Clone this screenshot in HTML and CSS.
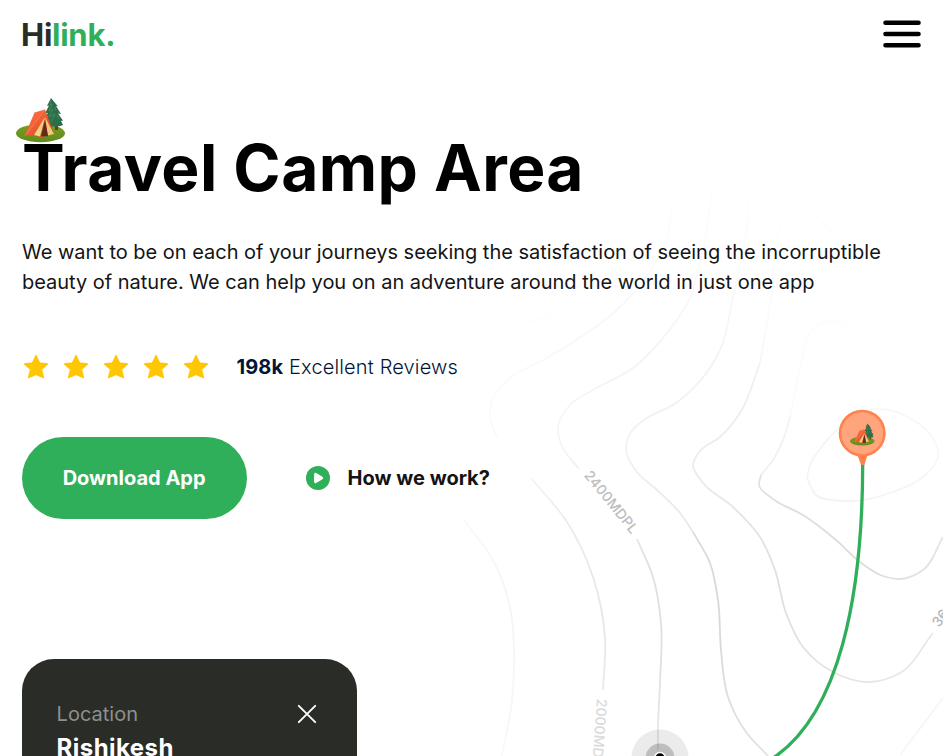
FILE: index.html
```
<!DOCTYPE html>
<html lang="en">
<head>
<meta charset="utf-8">
<meta name="viewport" content="width=device-width, initial-scale=1">
<title>Hilink</title>
<link rel="stylesheet" href="styles.css">
</head>
<body>
<svg width="0" height="0" class="sprite" aria-hidden="true">
  <defs>
    <linearGradient id="canvas" x1="0" y1="0" x2="1" y2="1"><stop offset="0" stop-color="#ff7a4c"/><stop offset="1" stop-color="#dd3d17"/></linearGradient>
    <linearGradient id="grass" x1="0" y1="0" x2="0" y2="1"><stop offset="0" stop-color="#789f25"/><stop offset="1" stop-color="#608a1c"/></linearGradient>
    <symbol id="camp" viewBox="0 0 50 48">
      <ellipse cx="24.500" cy="38.200" rx="24.500" ry="9" fill="url(#grass)"/>
      <path d="M39 25h3v10h-3z" fill="#654321"/>
      <path d="M35 3l-4 8 2-.5-4 8 3-.5-5 7 5-1-2 6c5 2 12 2 17 0l-2-4 2-.5-5-7 3 .5-5-8 2 .5z" fill="#2c6e4a"/>
      <path d="M35 5l-1 5 2-1-3 7 4-2-4 8 6-3-4 8M39 12l1 4M41 20l2 4" fill="none" stroke="#4b8a68" stroke-width=".8"/>
      <path d="M18.500 17.500 29 14.500 38 38.500 27 42 9 40z" fill="url(#canvas)"/>
      <path d="M29 14.500 9 40.500" stroke="#ff8358" stroke-width=".8" fill="none"/>
      <path d="M29 22 18 40l6 1.500z" fill="#efd58a"/>
      <path d="M29 22 38 39l-6 1.500z" fill="#ecca7c"/>
      <path d="M29 25 25 41.300h7z" fill="#5a2c1d"/>
    </symbol>
    <symbol id="star" viewBox="0 0 30 30">
      <path d="M15 3.500 18.500 11l8 .9-6 5.400 1.900 8.200-7.400-3.100-7.400 3.100 1.900-8.200-6-5.400 8-.9z" fill="#ffc704" stroke="#ffc704" stroke-width="1.400" stroke-linejoin="round"/>
    </symbol>
  </defs>
</svg>

<svg class="map" width="943" height="756" viewBox="0 0 943 756" aria-hidden="true">
  <defs>
    <radialGradient id="fade" gradientUnits="userSpaceOnUse" cx="800" cy="595" r="400">
      <stop offset="0" stop-color="#cfcfcf"/>
      <stop offset=".38" stop-color="#e0e0e0"/>
      <stop offset=".75" stop-color="#f5f5f5"/>
      <stop offset="1" stop-color="#fdfdfd"/>
    </radialGradient>
  </defs>
  <g id="contours" fill="none" stroke="url(#fade)" stroke-width="1.800"></g>
  <g class="altitude">
    <text transform="translate(583.500 475.500) rotate(51)" textLength="76" fill="#bdbdbd">2400MDPL</text>
    <text transform="translate(597 698.500) rotate(94)" textLength="76" fill="#dadada">2000MDPL</text>
    <text transform="translate(939 628) rotate(-53)" textLength="76" fill="#b5b5b5">3600MDPL</text>
  </g>
  <circle cx="660" cy="758" r="28.500" fill="#000" fill-opacity=".08"/>
  <circle cx="660" cy="758" r="14.500" fill="#000" fill-opacity=".19"/>
  <circle cx="660" cy="758" r="5.500" fill="#000" stroke="#fff" stroke-width="1.500"/>
  <path d="M862.700 463C862.700 600 838 712 776 756l-14 9" fill="none" stroke="#30af5b" stroke-width="3.300"/>
  <path d="M857.500 455h10l-3.200 10h-3.200z" fill="#ff814c"/>
  <circle cx="862.200" cy="433.200" r="22.200" fill="#ffa47c" stroke="#ff814c" stroke-width="2.500"/>
  <use href="#camp" x="850" y="422" width="25" height="24"/>
</svg>

<div class="page">
  <nav class="nav">
    <svg class="logo" width="96" height="29" role="img" aria-label="Hilink."><text x="-1" y="26.200" textLength="94.500"><tspan fill="#292c27">Hi</tspan><tspan fill="#30af5b">link.</tspan></text></svg>
    <svg class="menu" width="38" height="28" viewBox="0 0 38 28"><path d="M2.500 2.700h33M2.500 14h33M2.500 25.200h33" stroke="#000" stroke-width="4.600" stroke-linecap="round"/></svg>
  </nav>

  <section class="hero">
    <svg class="tent"><use href="#camp" width="50" height="48"/></svg>
    <h1>Travel Camp Area</h1>
    <p class="lead">We want to be on each of your journeys seeking the satisfaction of seeing the incorruptible beauty of nature. We can help you on an adventure around the world in just one app</p>
    <div class="reviews">
      <div class="stars">
        <svg><use href="#star"/></svg><svg><use href="#star"/></svg><svg><use href="#star"/></svg><svg><use href="#star"/></svg><svg><use href="#star"/></svg>
      </div>
      <p><b>198k</b> Excellent Reviews</p>
    </div>
    <div class="actions">
      <button class="btn download">Download App</button>
      <button class="btn how">
        <svg width="24" height="24" viewBox="0 0 24 24"><circle cx="12" cy="12" r="12" fill="#30af5b"/><path d="M9.500 8.200 15.700 12l-6.200 3.800z" fill="#fff" stroke="#fff" stroke-width="2.800" stroke-linejoin="round"/></svg>
        How we work?
      </button>
    </div>
    <article class="card">
      <div class="card-head">
        <span>Location</span>
        <svg width="24" height="24" viewBox="0 0 24 24"><path d="m3.800 3.800 16.400 16.400m0-16.400L3.800 20.200" stroke="#fff" stroke-width="1.900" stroke-linecap="round"/></svg>
      </div>
      <strong>Rishikesh</strong>
    </article>
  </section>
</div>
<script src="map.js"></script>
</body>
</html>
```
FILE: styles.css
```
* {
  box-sizing: border-box;
  margin: 0;
  padding: 0;
}

html,
body {
  height: 756px;
  overflow: hidden;
}

body {
  position: relative;
  background: #fff;
  color: #141414;
  font-family: Inter, "Liberation Sans", sans-serif;
}

.sprite {
  position: absolute;
}

.map {
  position: absolute;
  inset: 0;
}

.altitude {
  font-size: 14px;
  font-weight: 500;
}

.page {
  position: relative;
  padding: 0 22px;
}

.nav {
  display: flex;
  align-items: center;
  justify-content: space-between;
  height: 68px;
}

.logo {
  font-size: 31px;
  font-weight: 700;
  overflow: visible;
}

.hero {
  position: relative;
  padding-top: 68px;
}

.tent {
  position: absolute;
  left: -6px;
  top: 27px;
  width: 50px;
  height: 48px;
}

h1 {
  height: 64px;
  font-size: 64px;
  line-height: 64px;
  font-weight: 700;
  letter-spacing: 0.45px;
  color: #000;
  white-space: nowrap;
}

.lead {
  margin-top: 37px;
  font-size: 20px;
  line-height: 30px;
  letter-spacing: -0.018px;
}

.reviews {
  display: flex;
  align-items: center;
  gap: 20px;
  height: 30px;
  margin-top: 55px;
  font-size: 20px;
  color: #021639;
}

.reviews p {
  font-weight: 300;
  letter-spacing: 0.15px;
}

.reviews b {
  font-weight: 700;
}

.stars {
  display: flex;
  gap: 10px;
  width: 195px;
  margin: -1px 0 0 -0.6px;
}

.stars svg {
  flex: none;
  width: 30px;
  height: 30px;
}

.actions {
  display: flex;
  gap: 24px;
  margin: 55px 0 0 -0.4px;
}

.btn {
  display: flex;
  align-items: center;
  gap: 18px;
  height: 82px;
  border: 0;
  border-radius: 41px;
  background: none;
  font: 700 20px/30px Inter, sans-serif;
  color: #141414;
  white-space: nowrap;
}

.download {
  justify-content: center;
  width: 225px;
  background: #30af5b;
  color: #fff;
}

.how {
  padding-left: 35px;
}

.card {
  width: 335px;
  height: 240px;
  margin: 140px 0 0 -0.4px;
  padding: 40px 35px;
  border-radius: 32px;
  background: #292c27;
  color: #fff;
}

.card-head {
  display: flex;
  align-items: center;
  justify-content: space-between;
  height: 30px;
  padding-right: 3px;
  font-size: 20px;
  color: #8f8f8f;
}

.card strong {
  display: block;
  margin-top: 3px;
  font-size: 24px;
  line-height: 32px;
  letter-spacing: 0.45px;
}
```
FILE: map.js
```
// Draws a smooth curve through the points, with tangents weighted by
// the distance between neighbours.
function curve(text) {
  const p = text.split(" ").map(s => s.split(",").map(Number));
  const n = p.length;
  const len = i => Math.hypot(p[i + 1][0] - p[i][0], p[i + 1][1] - p[i][1]);
  const slope = (i, k) => (p[i + 1][k] - p[i][k]) / len(i);
  const tangent = (i, k) => {
    if (i === 0) return slope(0, k);
    if (i === n - 1) return slope(n - 2, k);
    const before = len(i - 1), after = len(i);
    return (slope(i - 1, k) * after + slope(i, k) * before) / (before + after);
  };
  let d = "M" + p[0];
  for (let i = 0; i < n - 1; i++) {
    const h = len(i) / 3;
    const q = [0, 1].map(k => p[i][k] + tangent(i, k) * h);
    const r = [0, 1].map(k => p[i + 1][k] - tangent(i + 1, k) * h);
    d += "C" + [q, r, p[i + 1]].join(" ");
  }
  return d;
}

// [opacity, points]
const contours = [
  [.6, "522,325 545,317 570,298 586,272"],
  [1, "672,203 667,237 653,267 620,307 587,333 543,360 510,378 493,398 490,417 497,437"],
  [1, "531,478 567,522 593,577 605,637 603,690"],
  [.9, "712,187 707,230 700,263 690,298 667,333 633,368 593,390 570,405 558,427 562,446 579,469"],
  [1, "637,539 653,577 661,623 660,683 658,727 658,750"],
  [.7, "750,167 747,227 733,297 720,350 700,381 673,405 647,418 631,432 626,450 637,472 657,490 680,513 693,532"],
  [1, "693,532 710,563 718,600 721,650 728,697 746,732 768,756"],
  [.4, "833,235 813,213 797,205 785,212 779,230 772,293 760,363"],
  [.7, "760,363 740,413 720,437 700,451 693,465 703,483 733,507 760,537 775,570 786,613 803,647 833,672 870,682 900,673 933,633"],
  [.18, "848,327 830,321 812,330 802,360 790,417"],
  [.45, "790,417 783,440 773,460 761,475"],
  [.85, "761,475 759,485 773,499 803,515 836,540 860,562 883,576 901,579 923,570 943,537"],
  [.32, "807,478 810,465 820,449 837,430 855,415 877,409 913,420 933,438 938,457 923,477 893,492 843,501 816,495 807,478"],
  [.9, "463,519 493,560 510,607 514,650 512,700 502,756"],
  [.35, "943,698 900,755"],
  [.15, "850,172 893,202 942,225"],
  [.1, "870,265 897,278"]
];

const group = document.getElementById("contours");
for (const [opacity, points] of contours) {
  const path = document.createElementNS("http://www.w3.org/2000/svg", "path");
  path.setAttribute("d", curve(points));
  path.setAttribute("opacity", opacity);
  group.appendChild(path);
}
```
